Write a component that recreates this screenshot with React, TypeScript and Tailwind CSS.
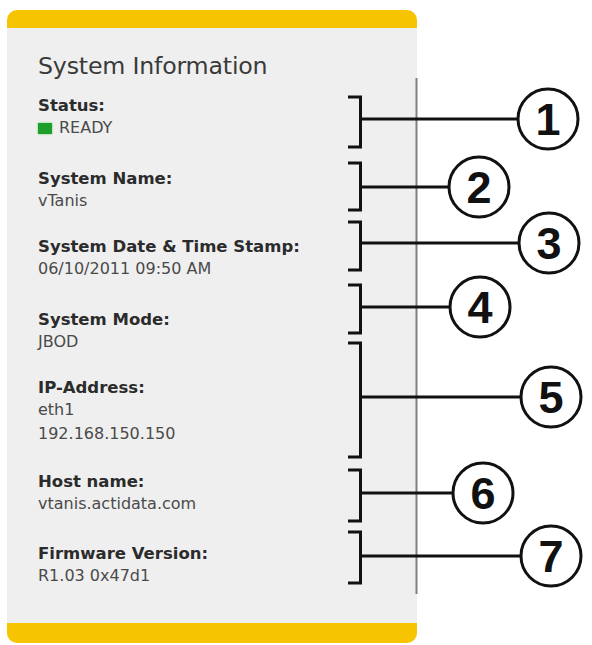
import React from "react";

type Field = { label: string; values: string[]; gap: string; status?: boolean };

const fields: Field[] = [
  { label: "Status:", values: ["READY"], gap: "mt-[15px]", status: true },
  { label: "System Name:", values: ["vTanis"], gap: "mt-[29px]" },
  { label: "System Date & Time Stamp:", values: ["06/10/2011 09:50 AM"], gap: "mt-[24px]" },
  { label: "System Mode:", values: ["JBOD"], gap: "mt-[29px]" },
  { label: "IP-Address:", values: ["eth1", "192.168.150.150"], gap: "mt-[24px]" },
  { label: "Host name:", values: ["vtanis.actidata.com"], gap: "mt-[26px]" },
  { label: "Firmware Version:", values: ["R1.03 0x47d1"], gap: "mt-[28px]" },
];

// bracket spans (top, bottom), callout line y, circle centre
const callouts = [
  { top: 97, bottom: 147, y: 119, cx: 548, n: "1" },
  { top: 163, bottom: 210, y: 187, cx: 479, n: "2" },
  { top: 222, bottom: 270, y: 243, cx: 549, n: "3" },
  { top: 285, bottom: 333, y: 307, cx: 480, n: "4" },
  { top: 343, bottom: 457, y: 397, cx: 551, n: "5" },
  { top: 470, bottom: 521, y: 493, cx: 483, n: "6" },
  { top: 532, bottom: 583, y: 556, cx: 551, n: "7" },
];

function Annotations() {
  return (
    <svg className="absolute inset-0 pointer-events-none" width="592" height="645" viewBox="0 0 592 645">
      <line x1="416.5" y1="78" x2="416.5" y2="594" stroke="#808080" strokeWidth="2" />
      {callouts.map((c) => (
        <g key={c.n} stroke="#111" strokeWidth="3" fill="none">
          <path d={`M348 ${c.top} H360.5 V${c.bottom} H348`} />
          <line x1="360" y1={c.y} x2={c.cx - 30} y2={c.y} />
          <circle cx={c.cx} cy={c.y} r="30" fill="#fff" />
          <text
            x={c.cx}
            y={c.y + 16}
            textAnchor="middle"
            fill="#111"
            stroke="none"
            fontSize="45"
            fontWeight="700"
            fontFamily="'Liberation Sans', Arial, sans-serif"
          >
            {c.n}
          </text>
        </g>
      ))}
    </svg>
  );
}

export default function App() {
  return (
    <div className="relative w-[592px] h-[645px] bg-white overflow-hidden font-['DejaVu_Sans',Verdana,sans-serif]">
      <div className="ml-[7px] pt-[10px] w-[410px]">
        <div className="h-[18px] bg-[#f6c400] rounded-t-[10px]" />
        <div className="h-[595px] bg-[#efefef] pl-[31px] pt-[24px]">
          <h2 className="text-[23.7px] leading-[28px] text-[#3a3a3a] tracking-[-0.2px]">System Information</h2>
          {fields.map((f) => (
            <div key={f.label} className={f.gap}>
              <div className="text-[16.5px] leading-[22px] font-bold text-[#2b2b2b]">{f.label}</div>
              {f.values.map((v, i) => (
                <div
                  key={v}
                  className={`flex items-center text-[16px] leading-[22px] text-[#4a4a4a] ${i > 0 ? "mt-[2px]" : ""}`}
                >
                  {f.status && (
                    <span className="inline-block w-[14px] h-[11px] bg-[#1f9e2c] mr-[7px] shadow-[0_0_2px_#5fd36a]" />
                  )}
                  {v}
                </div>
              ))}
            </div>
          ))}
        </div>
        <div className="h-[20px] bg-[#f6c400] rounded-b-[10px]" />
      </div>
      <Annotations />
    </div>
  );
}
